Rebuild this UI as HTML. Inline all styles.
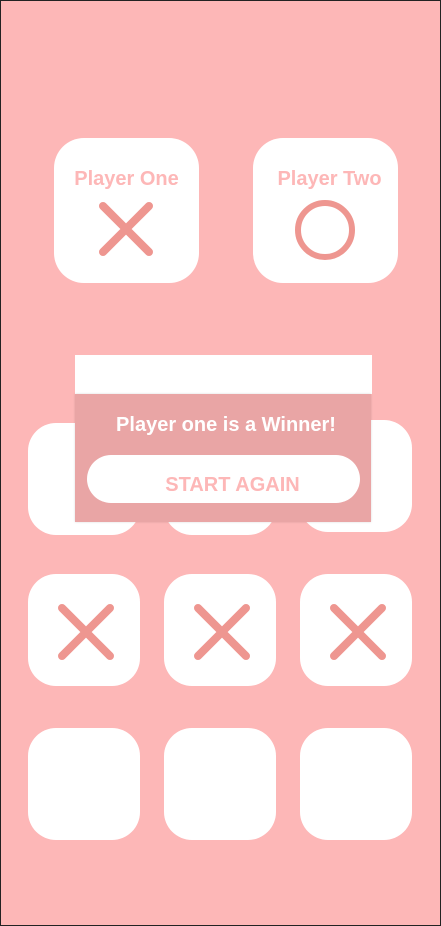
<!DOCTYPE html>
<html><head><style>
html,body{margin:0;padding:0}
body{width:441px;height:926px;position:relative;overflow:hidden;background:#fdb7b7;font-family:"Liberation Sans",sans-serif}
.frame{position:absolute;left:0;top:0;width:439px;height:924px;border:1px solid #222}
.c{position:absolute;background:#fff;border-radius:28px}
.p{position:absolute;background:#fff;border-radius:30px;width:145px;height:145px}
.lbl{position:absolute;left:0;right:0;text-align:center;top:30px;color:#fdb7b7;font-weight:bold;font-size:20px}
svg{position:absolute}
</style></head><body>
<div class="frame"></div>
<div class="p" style="left:54px;top:138px"><div class="lbl">Player One</div>
<svg style="left:43px;top:62px" width="60" height="60"><path d="M6 6L52 52M52 6L6 52" stroke="#ee9690" stroke-width="8" stroke-linecap="round"/></svg></div>
<div class="p" style="left:253px;top:138px"><div class="lbl" style="left:8px">Player Two</div>
<svg style="left:40px;top:62px" width="64" height="64"><circle cx="32" cy="30" r="27" fill="none" stroke="#ee9690" stroke-width="6"/></svg></div>

<div class="c" style="left:28px;top:423px;width:112px;height:112px"></div>
<div class="c" style="left:164px;top:423px;width:112px;height:112px"></div>
<div class="c" style="left:300px;top:420px;width:112px;height:112px"></div>

<div class="c" style="left:28px;top:574px;width:112px;height:112px"><svg style="left:30px;top:30px" width="60" height="60"><path d="M4 4L52 52M52 4L4 52" stroke="#ee9690" stroke-width="8" stroke-linecap="round"/></svg></div>
<div class="c" style="left:164px;top:574px;width:112px;height:112px"><svg style="left:30px;top:30px" width="60" height="60"><path d="M4 4L52 52M52 4L4 52" stroke="#ee9690" stroke-width="8" stroke-linecap="round"/></svg></div>
<div class="c" style="left:300px;top:574px;width:112px;height:112px"><svg style="left:30px;top:30px" width="60" height="60"><path d="M4 4L52 52M52 4L4 52" stroke="#ee9690" stroke-width="8" stroke-linecap="round"/></svg></div>

<div class="c" style="left:28px;top:728px;width:112px;height:112px"></div>
<div class="c" style="left:164px;top:728px;width:112px;height:112px"></div>
<div class="c" style="left:300px;top:728px;width:112px;height:112px"></div>

<div style="position:absolute;left:75px;top:355px;width:297px;height:39px;background:#fff"></div>
<div style="position:absolute;left:75px;top:394px;width:296px;height:128px;background:#e9a5a5;box-shadow:0 0 2px rgba(0,0,0,.15)">
<div style="position:absolute;left:6px;right:0;top:20px;text-align:center;color:#fff;font-weight:bold;font-size:20px">Player one is a Winner!</div>
<div style="position:absolute;left:12px;top:61px;width:273px;height:48px;background:#fff;border-radius:24px"></div>
<div style="position:absolute;left:21px;top:64px;width:273px;height:48px;padding-top:6px;box-sizing:border-box;text-align:center;line-height:42px;color:#fdb7b7;font-weight:bold;font-size:20px">START AGAIN</div>
</div>
</body></html>
